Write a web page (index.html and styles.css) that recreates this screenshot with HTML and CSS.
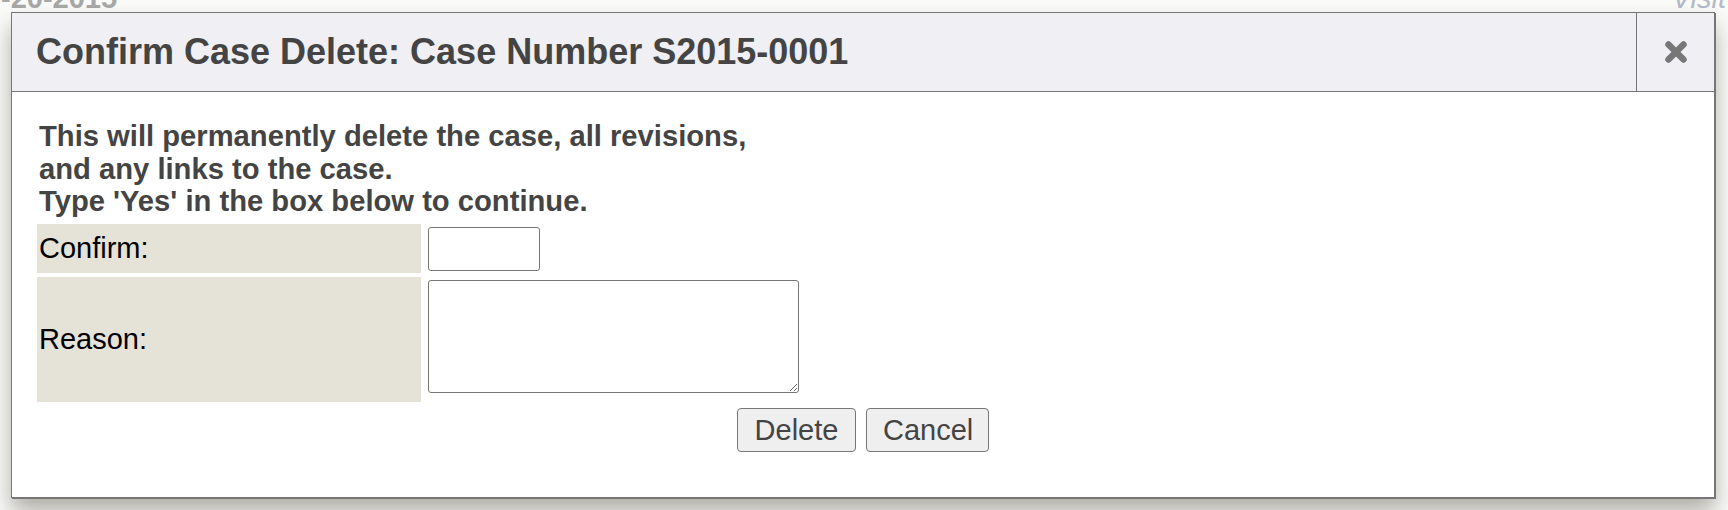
FILE: index.html
```html
<!DOCTYPE html>
<html lang="en">
<head>
<meta charset="utf-8">
<title>Confirm Case Delete</title>
<link rel="stylesheet" href="styles.css">
</head>
<body>
<div class="page">
  <div class="page-date">-20-2015</div>
  <div class="page-visit">Visit</div>
</div>
<div class="dialog" role="dialog">
  <div class="dialog-header">
    <div class="dialog-title">Confirm Case Delete: Case Number S2015-0001</div>
    <div class="dialog-close">
      <svg width="24" height="24" viewBox="0 0 24 24" aria-hidden="true">
        <path d="M4.5 4.5 L19.5 19.5 M19.5 4.5 L4.5 19.5" stroke="#777" stroke-width="6.5" stroke-linecap="round" fill="none"/>
      </svg>
    </div>
  </div>
  <div class="dialog-body">
    <div class="warning">This will permanently delete the case, all revisions,<br>and any links to the case.<br>Type 'Yes' in the box below to continue.</div>
    <div class="form-grid">
      <div class="label label-confirm">Confirm:</div>
      <div class="field field-confirm"><input class="confirm-input" type="text"></div>
      <div class="label label-reason">Reason:</div>
      <div class="field field-reason"><textarea class="reason-input"></textarea></div>
    </div>
    <div class="actions">
      <button class="btn btn-delete">Delete</button>
      <button class="btn btn-cancel">Cancel</button>
    </div>
  </div>
</div>
</body>
</html>
```
FILE: styles.css
```css
html, body {
  margin: 0;
  padding: 0;
}
body {
  width: 1728px;
  height: 510px;
  overflow: hidden;
  background: #fbfbfa;
  font-family: "Liberation Sans", Arial, sans-serif;
  position: relative;
}
.page {
  display: flex;
  justify-content: space-between;
  margin-top: -18px;
  padding: 0 0 0 1px;
}
.page-date {
  font-size: 29px;
  font-weight: bold;
  color: #a8a8a8;
}
.page-visit {
  font-size: 29px;
  font-style: italic;
  color: #b3bac8;
  margin-right: 2px;
}
.dialog {
  position: absolute;
  left: 11px;
  top: 12px;
  width: 1704px;
  height: 486px;
  box-sizing: border-box;
  border: 1px solid #767676;
  background: #fff;
  box-shadow: 1px 1px 0 #767676, 0 14px 22px rgba(40, 36, 20, 0.36);
  display: flex;
  flex-direction: column;
}
.dialog-header {
  display: flex;
  height: 79px;
  box-sizing: border-box;
  background: #efeff4;
  border-bottom: 1px solid #767676;
}
.dialog-title {
  flex: 1;
  display: flex;
  align-items: center;
  padding-left: 24px;
  font-size: 36px;
  font-weight: bold;
  color: #444;
}
.dialog-close {
  width: 77px;
  border-left: 1px solid #767676;
  display: flex;
  align-items: center;
  justify-content: center;
}
.dialog-body {
  padding: 28px 25px 0 25px;
}
.warning {
  padding-left: 2px;
  font-size: 29.2px;
  font-weight: bold;
  color: #444;
  line-height: 32.7px;
}
.form-grid {
  display: grid;
  grid-template-columns: 384px 1fr;
  grid-template-rows: 49px 125px;
  row-gap: 4px;
  column-gap: 3px;
  margin-top: 6px;
}
.label {
  background: #e5e2d8;
  display: flex;
  align-items: center;
  padding-left: 2px;
  font-size: 29px;
  color: #000;
}
.field {
  padding: 3px 0 0 4px;
}
.confirm-input {
  display: block;
  box-sizing: border-box;
  width: 112px;
  height: 44px;
  margin: 0;
  border: 1px solid #767676;
  border-radius: 3px;
  background: #fff;
  font-size: 20px;
}
.reason-input {
  display: block;
  box-sizing: border-box;
  width: 371px;
  height: 113px;
  margin: 0;
  border: 1px solid #767676;
  border-radius: 3px;
  background: #fff;
  font-size: 20px;
}
.actions {
  display: flex;
  justify-content: center;
  gap: 10px;
  margin-top: 6px;
}
.btn {
  height: 44px;
  box-sizing: border-box;
  margin: 0;
  padding: 0 16px;
  border: 1px solid #767676;
  border-radius: 4px;
  background: #efefef;
  color: #444;
  font-family: "Liberation Sans", Arial, sans-serif;
  font-size: 29px;
}
.btn-delete {
  width: 119px;
}
.btn-cancel {
  width: 123px;
}
```
